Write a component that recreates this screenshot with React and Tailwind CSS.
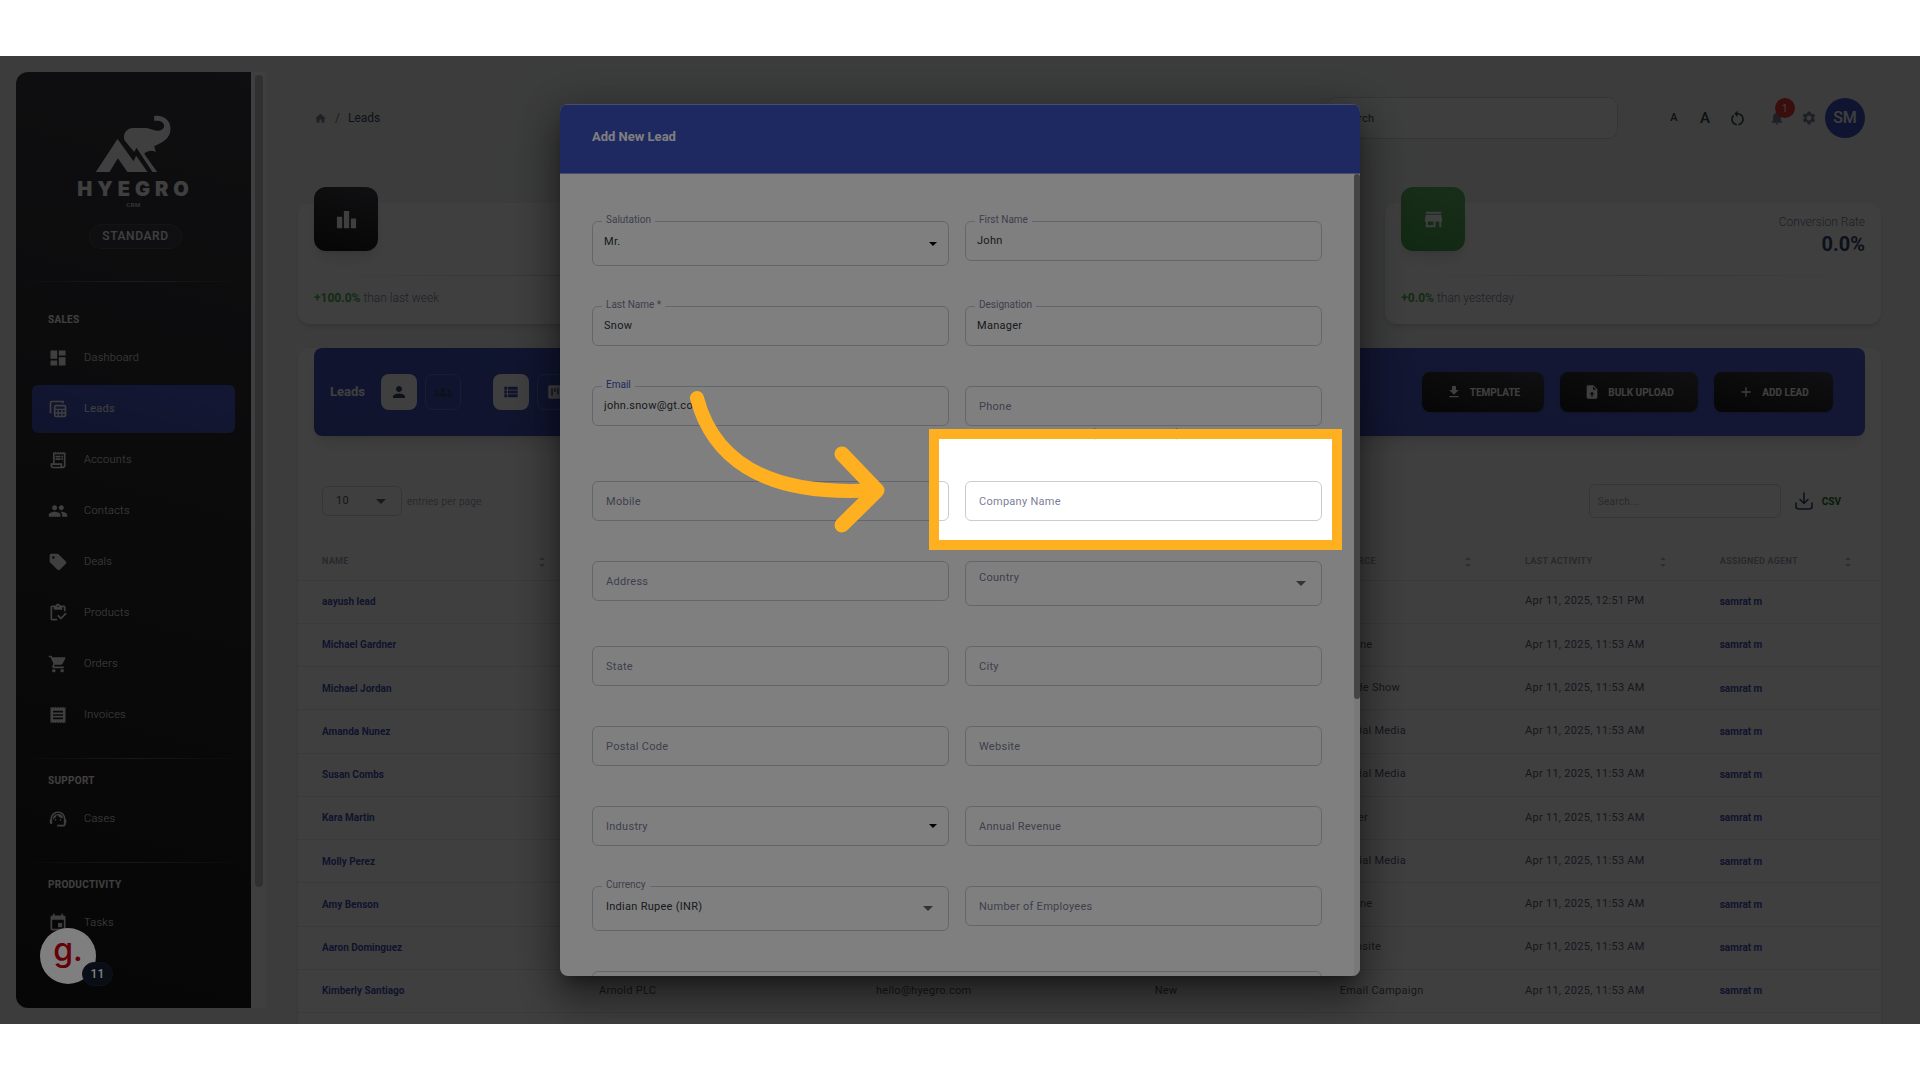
import {
  MdAdd,
  MdDashboard,
  MdDownload,
  MdEvent,
  MdGroups,
  MdHome,
  MdLeaderboard,
  MdNotifications,
  MdOutlineInventory,
  MdOutlineReceiptLong,
  MdPeople,
  MdPerson,
  MdReceipt,
  MdRestartAlt,
  MdSell,
  MdSettings,
  MdShoppingCart,
  MdStore,
  MdSupportAgent,
  MdViewKanban,
  MdViewList,
} from "react-icons/md";

function LeadsIcon({ size = 20 }) {
  return (
    <svg width={size} height={size} viewBox="0 0 24 24" fill="none" stroke="currentColor" strokeWidth="2">
      <path d="M3 17V4.5A1.5 1.5 0 0 1 4.5 3H18v2" />
      <rect x="8" y="8" width="13" height="13" rx="1.5" />
      <path d="M8 12.5h13M8 16.8h13M12.3 12v9M16.7 12v9" strokeWidth="1.6" />
    </svg>
  );
}

function FileUploadIcon() {
  return (
    <svg width="16" height="16" viewBox="0 0 24 24" fill="currentColor">
      <path
        fillRule="evenodd"
        d="M14 2H6a2 2 0 0 0-2 2v16a2 2 0 0 0 2 2h12a2 2 0 0 0 2-2V8l-6-6zM12 11.5l3.6 3.8H13V19h-2v-3.700H8.400L12 11.500zM13.500 3.800 18.200 8.500h-4.700z"
      />
    </svg>
  );
}

function TrayDownloadIcon() {
  return (
    <svg width="20" height="20" viewBox="0 0 20 20" fill="none" stroke="currentColor" strokeWidth="1.6" strokeLinecap="round" strokeLinejoin="round">
      <path d="M10 2v10M6 8.500l4 4 4-4" />
      <path d="M2 12v3.500a2.500 2.500 0 0 0 2.500 2.500h11a2.500 2.500 0 0 0 2.500-2.500V12" />
    </svg>
  );
}

function Logo() {
  return (
    <div className="flex flex-col items-center text-white">
      <svg width="77" height="58" viewBox="145 30 230 174" fill="currentColor">
        <path d="M212 102 147 201h41l25-41 29 41h60l-34-49-8 17z" />
        <path d="M262 141 233 106c-6-20 6-36 25-37h42c14 2 30 14 45 5 12-8 8-24-9-27h-14V33c24-5 49 10 49 38 0 24-16 35-31 44l-18 9 5 17c-12-6-24-4-35 5l39 55h-14l-48-73z" />
      </svg>
      <div className="mt-1 h-6 pl-1 font-['Inter'] text-[20px] leading-6 font-black tracking-[0.25em]">HYEGRO</div>
      <div className="h-2 text-[6px] leading-2 tracking-widest">CRM</div>
    </div>
  );
}

function NavItem({ icon: Icon, label, active }) {
  return (
    <a
      href="#"
      className={
        active
          ? "flex h-12 items-center gap-4 rounded-md bg-linear-195 from-[#5060d4] to-[#3f50b5] px-4 text-white"
          : "flex h-12 items-center gap-4 rounded-md px-4 text-white"
      }
    >
      <Icon size={20} className="shrink-0" />
      <span className={active ? "" : "font-light"}>{label}</span>
    </a>
  );
}

function NavSection({ title, items, first }) {
  return (
    <section>
      <hr className="h-px border-0 bg-linear-to-r from-white/0 via-white/30 to-white/0" />
      <h6 className={first ? "mt-[30px] px-8 text-[10px] leading-4 font-bold text-white" : "mt-[14px] px-8 text-[10px] leading-4 font-bold text-white"}>{title}</h6>
      <div className="mt-[6px] flex flex-col gap-[3px] px-4">
        {items.map(([icon, label, active]) => (
          <NavItem key={label} icon={icon} label={label} active={active} />
        ))}
      </div>
    </section>
  );
}

function Sidebar() {
  return (
    <aside className="my-4 ml-4 flex w-[250px] shrink-0 overflow-hidden rounded-l-xl">
      <div className="flex-1 overflow-hidden bg-linear-195 from-[#3c3c44] to-[#191919] pt-[43px]">
        <Logo />
        <div className="mt-[15px] mb-8 flex justify-center pl-1">
          <span className="rounded-full border border-white/10 bg-white/5 px-3 text-[12px] leading-[23px] font-medium tracking-wider text-white">STANDARD</span>
        </div>
        <div className="flex flex-col gap-[19px]">
          <NavSection
            first
            title="SALES"
            items={[
              [MdDashboard, "Dashboard"],
              [LeadsIcon, "Leads", true],
              [MdOutlineReceiptLong, "Accounts"],
              [MdPeople, "Contacts"],
              [MdSell, "Deals"],
              [MdOutlineInventory, "Products"],
              [MdShoppingCart, "Orders"],
              [MdReceipt, "Invoices"],
            ]}
          />
          <NavSection title="SUPPORT" items={[[MdSupportAgent, "Cases"]]} />
          <NavSection title="PRODUCTIVITY" items={[[MdEvent, "Tasks"]]} />
        </div>
      </div>
      <div className="w-[15px] bg-[#fcfcfc] pt-[3px] pl-1">
        <div className="h-[87%] w-2 rounded-full bg-[#c1c1c1]" />
      </div>
    </aside>
  );
}

function Header() {
  return (
    <header className="flex h-[42px] items-center justify-between px-4">
      <nav className="flex items-center gap-2 text-[12px] tracking-normal text-[#344767]">
        <a href="#" aria-label="Home" className="text-[#7b809a]">
          <MdHome size={13} />
        </a>
        <span className="text-[#6c757d]">/</span>
        <span>Leads</span>
      </nav>
      <div className="flex items-center">
        <input
          aria-label="Search"
          placeholder="Search"
          className="mr-12 h-[42px] w-[292px] rounded-[10px] border border-[#d2d6da] bg-[#f8fbfa] px-3 text-[11px] placeholder-[#495057]"
        />
        <div className="flex items-center gap-[15px] text-[#334444]">
          <button className="w-4 text-[11px] font-medium">A</button>
          <button className="w-4 text-[15px] font-medium">A</button>
          <button aria-label="Reset text size">
            <MdRestartAlt size={19} />
          </button>
        </div>
        <button aria-label="Notifications" className="relative ml-[22px] text-[#7b809a]">
          <MdNotifications size={16} />
          <span className="absolute -top-3 left-[6px] flex size-5 items-center justify-center rounded-full bg-[#e53935] text-[10px] text-white">1</span>
        </button>
        <button aria-label="Settings" className="ml-4 text-[#7b809a]">
          <MdSettings size={16} />
        </button>
        <button className="ml-2 size-10 rounded-full bg-[#3f51c0] text-[16px] font-medium tracking-normal text-white">SM</button>
      </div>
    </header>
  );
}

function StatCard({ icon: Icon, tone, change, note, title, value }) {
  return (
    <article className="flex h-[121px] flex-col rounded-xl bg-white px-4 tracking-normal shadow-md">
      <div className="flex h-[72px] justify-between">
        {Icon && (
          <div className={tone === "green" ? "-mt-4 flex size-16 items-center justify-center rounded-xl bg-linear-195 from-[#66bb6a] to-[#43a047] text-white shadow-lg" : "-mt-4 flex size-16 items-center justify-center rounded-xl bg-linear-195 from-[#42424a] to-[#191919] text-white shadow-lg"}>
            <Icon size={23} />
          </div>
        )}
        <div className="pt-[11px] text-right">
          <div className="text-[12px] leading-4 font-light text-[#7b809a]">{title}</div>
          <div className="text-[20px] leading-7 font-bold text-[#344767]">{value}</div>
        </div>
      </div>
      <hr className="h-px border-0 bg-linear-to-r from-gray-500/0 via-gray-500/30 to-gray-500/0" />
      <p className="mt-[14px] text-[12px] leading-4 font-light text-[#7b809a]">
        <strong className="font-bold text-[#4caf50]">{change}</strong> {note}
      </p>
    </article>
  );
}

const darkButton = "flex h-10 items-center justify-center gap-2 rounded-lg bg-linear-195 from-[#42424a] to-[#191919] text-[10px] font-bold tracking-normal text-white shadow";

function LeadsBar() {
  return (
    <div className="mx-4 -mt-6 flex h-[88px] items-center rounded-lg bg-linear-195 from-[#5060d4] to-[#3f50b5] pr-8 pl-4 text-white shadow-lg">
      <h2 className="w-[51px] text-[13px] font-bold tracking-normal">Leads</h2>
      <button aria-label="My leads" className="flex size-9 items-center justify-center rounded-lg bg-white text-[#344767]">
        <MdPerson size={18} />
      </button>
      <button aria-label="Team leads" className="ml-2 flex size-9 items-center justify-center rounded-lg border border-white/20 text-[#344767]">
        <MdGroups size={18} />
      </button>
      <button aria-label="List view" className="ml-8 flex size-9 items-center justify-center rounded-lg bg-white text-[#3f51b5]">
        <MdViewList size={18} />
      </button>
      <button aria-label="Board view" className="ml-2 flex size-9 items-center justify-center rounded-lg border border-white/20">
        <MdViewKanban size={18} />
      </button>
      <div className="ml-auto flex gap-4">
        <button className={`${darkButton} w-[122px]`}>
          <MdDownload size={16} />
          TEMPLATE
        </button>
        <button className={`${darkButton} w-[138px]`}>
          <FileUploadIcon />
          BULK UPLOAD
        </button>
        <button className={`${darkButton} w-[119px]`}>
          <MdAdd size={16} />
          ADD LEAD
        </button>
      </div>
    </div>
  );
}

const COLUMNS = [
  ["NAME", "w-[17.5%]"],
  ["COMPANY", "w-[17.5%]"],
  ["EMAIL", "w-[17.6%]"],
  ["STATUS", "w-[11.7%]"],
  ["SOURCE", "w-[11.7%]"],
  ["LAST ACTIVITY", "w-[12.3%]"],
  ["ASSIGNED AGENT", "w-[11.7%]"],
];

const ROWS = [
  ["aayush lead", "", "", "Apr 11, 2025, 12:51 PM"],
  ["Michael Gardner", "", "Phone", "Apr 11, 2025, 11:53 AM"],
  ["Michael Jordan", "", "Trade Show", "Apr 11, 2025, 11:53 AM"],
  ["Amanda Nunez", "", "Social Media", "Apr 11, 2025, 11:53 AM"],
  ["Susan Combs", "", "Social Media", "Apr 11, 2025, 11:53 AM"],
  ["Kara Martin", "", "Other", "Apr 11, 2025, 11:53 AM"],
  ["Molly Perez", "", "Social Media", "Apr 11, 2025, 11:53 AM"],
  ["Amy Benson", "", "Phone", "Apr 11, 2025, 11:53 AM"],
  ["Aaron Dominguez", "", "Website", "Apr 11, 2025, 11:53 AM"],
  ["Kimberly Santiago", "Arnold PLC", "Email Campaign", "Apr 11, 2025, 11:53 AM"],
];

function SortIcon() {
  return (
    <svg width="6" height="10" viewBox="0 0 6 10" fill="#9a9eaa">
      <path d="M3 0l3 3H0zM3 10l3-3H0z" />
    </svg>
  );
}

function LeadsTable() {
  return (
    <table className="mt-[26px] h-[469px] w-full table-fixed text-left text-[#5a6078]">
      <thead>
        <tr className="h-9 border-b border-[#e9ebee]">
          {COLUMNS.map(([name, width]) => (
            <th key={name} className={`${width} pr-[30px] pl-6 text-[9px] font-bold text-[#7b809a] opacity-70`}>
              <span className="flex items-center justify-between whitespace-nowrap">
                {name}
                <SortIcon />
              </span>
            </th>
          ))}
        </tr>
      </thead>
      <tbody>
        {ROWS.map(([name, company, source, date]) => (
          <tr key={name} className="h-[43px] border-b border-[#e9ebee]">
            <td className="pl-6 text-[10px] font-bold tracking-normal">
              <a href="#" className="text-[#3f51b5]">{name}</a>
            </td>
            <td className="pl-6">{company}</td>
            <td className="pl-6">hello@hyegro.com</td>
            <td className="pl-6">New</td>
            <td className="pl-6 whitespace-nowrap">{source}</td>
            <td className="pl-6 whitespace-nowrap">{date}</td>
            <td className="pl-6 text-[10px] font-bold tracking-normal">
              <a href="#" className="text-[#3f51b5]">samrat m</a>
            </td>
          </tr>
        ))}
      </tbody>
    </table>
  );
}

function Caret({ small }) {
  return (
    <span className={small ? "pointer-events-none absolute inset-y-0 right-3 flex items-center text-black" : "pointer-events-none absolute inset-y-0 right-4 flex items-center text-[#666]"}>
      <svg width={small ? 8 : 10} height={small ? 4 : 5} viewBox="0 0 10 5" fill="currentColor">
        <path d="M0 0h10L5 5z" />
      </svg>
    </span>
  );
}

function LeadsPanel() {
  return (
    <section className="mt-12 rounded-xl bg-white pb-16 shadow-md">
      <LeadsBar />
      <div className="mt-12 flex h-[34px] items-center pr-10 pl-6">
        <div className="relative">
          <select id="page-size" className="h-[30px] w-20 appearance-none rounded-md border border-[#d2d6da] pl-[13px] text-[#555]">
            <option>10</option>
          </select>
          <Caret />
        </div>
        <label htmlFor="page-size" className="ml-[5px] text-[10px] font-light text-[#7b809a]">
          entries per page
        </label>
        <input aria-label="Search leads" placeholder="Search..." className="ml-auto h-[34px] w-48 rounded-md border border-[#d2d6da] px-2 text-[10px] placeholder-[#a4a8b4]" />
        <button className="ml-[13px] flex items-center gap-2 text-[10px] font-bold tracking-normal text-[#1a6e1a]">
          <span className="text-[#344767]">
            <TrayDownloadIcon />
          </span>
          CSV
        </button>
      </div>
      <LeadsTable />
    </section>
  );
}

function Field({ id, label, value, select, caret, tall, focused, helper }) {
  const control =
    "block w-full appearance-none rounded-md border border-[#c9ccd2] bg-transparent pb-0.5 text-[#30343a] " +
    (tall ? "h-[45px] " : "h-10 ") +
    (caret === "large" ? "px-[13px]" : "px-[11px]");
  const raised = "absolute -top-[9px] left-[10px] bg-white px-1 text-[10px] leading-4 tracking-normal ";
  return (
    <div>
      <div className="relative">
        {select ? (
          <select id={id} defaultValue={value || ""} className={control}>
            <option>{value || ""}</option>
          </select>
        ) : (
          <input id={id} defaultValue={value || ""} className={control} />
        )}
        <label
          htmlFor={id}
          className={
            value
              ? raised + (focused ? "text-[#3f51b5]" : "text-[#7b809a]")
              : tall
                ? "absolute top-[9px] left-[14px] leading-4 text-[#7b809a]"
                : "absolute top-[13px] left-[14px] leading-4 text-[#7b809a]"
          }
        >
          {label}
        </label>
        {select && <Caret small={caret !== "large"} />}
      </div>
      {helper && <p className="h-[15px] pr-4 text-center text-[10px] leading-4 tracking-normal text-[#7b809a]">{helper}</p>}
    </div>
  );
}

function AddLeadDialog() {
  return (
    <div className="absolute inset-0 flex justify-center bg-black/50 p-12">
      <div
        role="dialog"
        aria-labelledby="dialog-title"
        className="flex h-full w-full max-w-[800px] flex-col overflow-hidden rounded-lg bg-white shadow-[0_11px_15px_-7px_rgba(0,0,0,0.4),0_24px_38px_3px_rgba(0,0,0,0.28),0_9px_46px_8px_rgba(0,0,0,0.24)]"
      >
        <h1 id="dialog-title" className="flex h-[70px] shrink-0 items-center border-y border-[#8f9adf] bg-[#3e52c2] px-8 pb-1 text-[13px] font-bold tracking-normal text-white">
          Add New Lead
        </h1>
        <div className="flex min-h-0 flex-1">
          <form className="grid flex-1 grid-cols-2 content-start items-start gap-x-4 gap-y-10 overflow-hidden pt-[47px] pr-8 pl-8">
            <Field id="salutation" label="Salutation" value="Mr." select tall />
            <Field id="first-name" label="First Name" value="John" />
            <Field id="last-name" label="Last Name *" value="Snow" />
            <Field id="designation" label="Designation" value="Manager" />
            <Field id="email" label="Email" value="john.snow@gt.com" focused />
            <Field id="phone" label="Phone" helper="(e.g. +1234567890)" />
            <Field id="mobile" label="Mobile" />
            <Field id="company" label="Company Name" />
            <Field id="address" label="Address" />
            <Field id="country" label="Country" select tall caret="large" />
            <Field id="state" label="State" />
            <Field id="city" label="City" />
            <Field id="postal" label="Postal Code" />
            <Field id="website" label="Website" />
            <Field id="industry" label="Industry" select />
            <Field id="revenue" label="Annual Revenue" />
            <Field id="currency" label="Currency" value="Indian Rupee (INR)" select tall caret="large" />
            <Field id="employees" label="Number of Employees" />
            <div className="col-span-2">
              <textarea aria-label="Description" className="block h-24 w-full resize-none rounded-md border border-[#c9ccd2]" />
            </div>
          </form>
          <div className="w-[6px] bg-[#f1f1f1]">
            <div className="h-[65.5%] rounded-full bg-[#888]" />
          </div>
        </div>
      </div>
    </div>
  );
}

function HelpBadge() {
  return (
    <button className="absolute bottom-10 left-10 size-14 rounded-full bg-white">
      <span className="block pb-3 font-['Inter'] text-[32px] leading-10 font-medium tracking-normal text-[#c8000c]">g.</span>
      <span className="absolute -right-[17px] -bottom-[2px] flex h-6 w-[31px] items-center justify-center rounded-full border border-[#1c2436] bg-[#121a2c] text-[12px] font-medium text-white">11</span>
    </button>
  );
}

function Spotlight() {
  return (
    <>
      <div className="pointer-events-none absolute top-[373px] left-1/2 -ml-[31px] h-[121px] w-[413px] border-10 border-[#feb021] shadow-[0_0_0_9999px_rgba(0,0,0,0.5)]" />
      <svg className="pointer-events-none absolute top-[328px] left-1/2 -ml-[270px]" width="200" height="160" viewBox="690 384 200 160" fill="none" stroke="#feb021" strokeWidth="14" strokeLinecap="round" strokeLinejoin="round">
        <path d="M697 398C711 452 756 498 876 490" />
        <path d="M842 454 877 490.500 842 525" strokeWidth="15" />
      </svg>
    </>
  );
}

export default function App() {
  return (
    <div className="flex h-screen flex-col bg-white py-14 font-['Roboto',sans-serif] text-[11px] tracking-wide">
      <div className="relative flex min-h-0 flex-1 overflow-hidden bg-[#f0f2f5]">
        <Sidebar />
        <main className="min-w-0 flex-1 overflow-hidden pt-[41px] pr-[39px] pl-8">
          <Header />
          <div className="mt-16 grid grid-cols-3 gap-12">
            <StatCard icon={MdLeaderboard} change="+100.0%" note="than last week" />
            <StatCard />
            <StatCard icon={MdStore} tone="green" change="+0.0%" note="than yesterday" title="Conversion Rate" value="0.0%" />
          </div>
          <LeadsPanel />
        </main>
        <AddLeadDialog />
        <HelpBadge />
        <Spotlight />
      </div>
    </div>
  );
}
